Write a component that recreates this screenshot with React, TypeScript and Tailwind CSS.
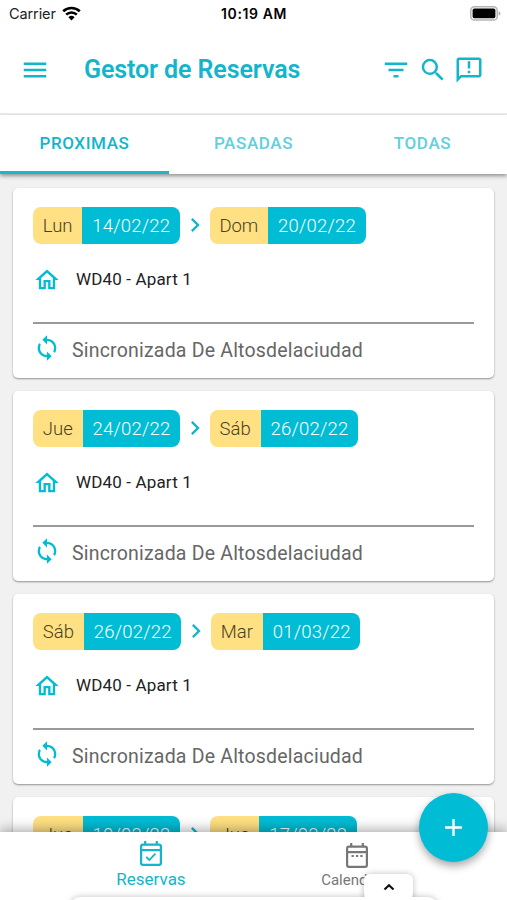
import { MdAdd, MdChevronRight, MdFilterList, MdMenu, MdOutlineHome, MdSearch, MdSync } from 'react-icons/md'

const reservas = [
  { from: ['Lun', '14/02/22'], to: ['Dom', '20/02/22'] },
  { from: ['Jue', '24/02/22'], to: ['Sáb', '26/02/22'] },
  { from: ['Sáb', '26/02/22'], to: ['Mar', '01/03/22'] },
  { from: ['Jue', '10/03/22'], to: ['Jue', '17/03/22'] },
]

function FeedbackIcon() {
  return (
    <svg width="30" height="30" viewBox="0 0 24 24" fill="currentColor">
      <path d="M20 2H4c-1.1 0-2 .9-2 2v18l4-4h14c1.1 0 2-.9 2-2V4c0-1.1-.9-2-2-2zm0 14H5.2L4 17.2V4h16v12zM11 5h2v5.8h-2zm0 7.5h2v2h-2z" />
    </svg>
  )
}

function CalendarIcon({ checked }: { checked?: boolean }) {
  return (
    <svg width="22" height="25" viewBox="0 0 22 25" fill="none" stroke="currentColor" strokeWidth="2.2">
      <rect x="1.1" y="3.6" width="19.8" height="20.2" rx="1.8" />
      <path d="M1 9.2h20M5.2 0v4M16.8 0v4" />
      {checked ? <path d="m6.2 15.8 3.2 3.2 6-6.4" strokeWidth="1.8" /> : <path d="M5.5 13h2.3M9.9 13h2.3M14.3 13h2.3" />}
    </svg>
  )
}

function StatusBar() {
  return (
    <div className="grid h-[27px] shrink-0 grid-cols-3 items-center pr-[6px] pl-[9px] font-[Inter,sans-serif] text-[14.5px] text-[#222]">
      <div className="flex items-center gap-[6px]">
        <span className="tracking-[-0.1px]">Carrier</span>
        <svg width="19" height="15" viewBox="0 0 19 15" fill="none" stroke="#000" strokeWidth="2.6">
          <path d="M1.2 5.3a12 12 0 0 1 16.6 0" />
          <path d="M4.2 8.6a7.6 7.6 0 0 1 10.6 0" />
          <path d="M9.5 14.4 6.4 11.2a4.5 4.5 0 0 1 6.2 0z" fill="#000" stroke="none" />
        </svg>
      </div>
      <span className="-ml-[2px] text-center text-[14px] font-semibold tracking-[0.6px] whitespace-nowrap text-black">10:19 AM</span>
      <svg className="justify-self-end" width="31" height="15" viewBox="0 0 31 15">
        <rect x="0.8" y="0.8" width="26.4" height="13.2" rx="3.6" fill="#fff" stroke="#b3b3b3" strokeWidth="1.5" />
        <rect x="2.6" y="2.6" width="22.8" height="9.6" rx="1.6" fill="#000" />
        <path d="M28.6 5.2c2.4.8 2.4 3.6 0 4.4z" fill="#aaa" />
      </svg>
    </div>
  )
}

function Header() {
  return (
    <header className="flex h-[88px] shrink-0 items-center border-b-2 border-[#ededed] pr-[23px] pl-[20px] text-[#12b5cb]">
      <MdMenu size={30} />
      <h1 className="ml-[34px] flex-1 text-[25px] font-semibold tracking-[-0.1px] whitespace-nowrap">Gestor de Reservas</h1>
      <div className="flex items-center gap-[6.5px]">
        <MdFilterList size={30} />
        <MdSearch size={30} />
        <FeedbackIcon />
      </div>
    </header>
  )
}

function TabBar() {
  return (
    <nav className="relative z-10 grid h-[58.5px] shrink-0 grid-cols-3 bg-white text-[17px] font-medium tracking-[0.6px] text-[#5fd0dd] shadow-[0_2px_4px_rgba(0,0,0,0.4)]">
      <button type="button" className="border-b-[3px] border-[#1bb6cb] pt-[1px] text-[#12b5cb]">
        PROXIMAS
      </button>
      <button type="button" className="pb-[2px]">PASADAS</button>
      <button type="button" className="pb-[2px]">TODAS</button>
    </nav>
  )
}

function DateChip({ value }: { value: string[] }) {
  return (
    <div className="flex h-[37px] overflow-hidden rounded-[8px] text-[18.5px] leading-[38px]">
      <span className="bg-[#ffe082] px-[9.8px] font-light text-[#4a3f22]">{value[0]}</span>
      <span className="bg-[#00bcd4] pr-[9.8px] pl-[10px] font-light tracking-[0.2px] text-white">{value[1]}</span>
    </div>
  )
}

function ReservaCard({ from, to }: { from: string[]; to: string[] }) {
  return (
    <article className="h-[190px] shrink-0 rounded-[5px] bg-white px-[20px] pt-[19px] shadow-[0_1px_2px_rgba(0,0,0,0.4)]">
      <div className="flex items-center">
        <DateChip value={from} />
        <MdChevronRight size={28} className="mx-[0.8px] text-[#12b5cb]" />
        <DateChip value={to} />
      </div>
      <div className="mt-[22px] flex h-[28px] items-center">
        <MdOutlineHome size={28} className="text-[#00bcd4]" />
        <span className="ml-[15px] text-[17px] tracking-[0.15px] text-[#222]">WD40 - Apart 1</span>
      </div>
      <div className="mt-[28px] flex items-center border-t-2 border-[#999] pt-[10px]">
        <MdSync size={28} className="text-[#00bcd4]" />
        <span className="ml-[11px] pt-[5px] text-[19.5px] leading-[23px] tracking-[0.2px] text-[#666]">Sincronizada De Altosdelaciudad</span>
      </div>
    </article>
  )
}

export default function App() {
  return (
    <div className="relative flex h-[900px] w-[507px] flex-col overflow-hidden bg-white font-[Roboto,sans-serif]">
      <StatusBar />
      <Header />
      <TabBar />
      <main className="flex min-h-0 flex-1 flex-col gap-[13px] overflow-hidden bg-[#f1f1f1] px-[13px] pt-[14px]">
        {reservas.map((r, i) => (
          <ReservaCard key={i} from={r.from} to={r.to} />
        ))}
      </main>

      <footer className="relative h-[68.5px] shrink-0 bg-white shadow-[0_-2px_12px_rgba(0,0,0,0.35)]">
        <div className="flex pl-[48px]">
          <button type="button" className="flex w-[206px] flex-col items-center pt-[9.5px] text-[17px] text-[#12b5cb]">
            <CalendarIcon checked />
            <span className="mt-[3px] leading-[20px]">Reservas</span>
          </button>
          <button type="button" className="flex w-[206px] flex-col items-center pt-[11.5px] text-[15px] text-[#777]">
            <CalendarIcon />
            <span className="mt-[3px] leading-[18px]">Calendario</span>
          </button>
        </div>
        {/* bottom sheet edge and its handle */}
        <div className="absolute top-[42px] left-[364px] h-[30px] w-[49px] rounded-t-[6px] bg-white shadow-[0_0_6px_rgba(0,0,0,0.25)]" />
        <div className="absolute top-[65px] left-[70px] h-[20px] w-[368px] rounded-t-[10px] bg-white shadow-[0_0_6px_rgba(0,0,0,0.25)]" />
        <div className="absolute top-[44px] left-[365px] flex h-[26px] w-[47px] justify-center bg-white pt-[7px]">
          <svg width="12" height="8" viewBox="0 0 12 8" fill="none" stroke="#111" strokeWidth="2.2">
            <path d="m1.5 6.5 4.5-4.3 4.5 4.3" />
          </svg>
        </div>
      </footer>

      <button
        type="button"
        className="absolute top-[793px] left-[418.5px] flex size-[69px] items-center justify-center rounded-full bg-[#00bcd4] text-white shadow-[0_4px_8px_rgba(0,0,0,0.35)]"
      >
        <MdAdd size={29} />
      </button>
    </div>
  )
}
